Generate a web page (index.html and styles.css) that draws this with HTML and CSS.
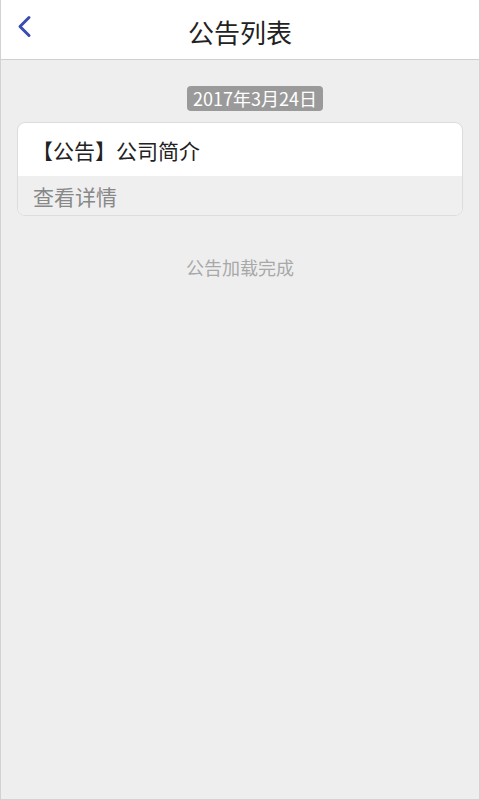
FILE: index.html
```html
<!DOCTYPE html>
<html lang="zh-CN">
<head>
<meta charset="utf-8">
<title>公告列表</title>
<link rel="stylesheet" href="styles.css">
</head>
<body>
<div class="app">
  <header class="topbar">
    <a class="back" href="#" aria-label="返回">
      <svg width="20" height="26" viewBox="0 0 20 26"><path d="M14 3.5 L5 12.5 L14 21.5" fill="none" stroke="#3b4cb0" stroke-width="3" stroke-linecap="round" stroke-linejoin="round"/></svg>
    </a>
    <h1 class="title">公告列表</h1>
    <span></span>
  </header>
  <main class="content">
    <div class="date-row"><span class="date">2017年3月24日</span></div>
    <div class="card">
      <div class="card-title">【公告】公司简介</div>
      <div class="card-foot">查看详情</div>
    </div>
    <p class="done">公告加载完成</p>
  </main>
</div>
</body>
</html>
```

FILE: styles.css
```css
html, body {
  margin: 0;
  padding: 0;
}
body {
  font-family: "Noto Sans CJK SC", "Noto Sans", sans-serif;
  background: #eeeeee;
}
.app {
  box-sizing: border-box;
  width: 480px;
  height: 800px;
  background: #eeeeee;
  border: 1px solid #d2d2d2;
  border-top: none;
  display: flex;
  flex-direction: column;
}
.topbar {
  height: 59px;
  background: #ffffff;
  border-bottom: 1px solid #cfcfcf;
  display: grid;
  grid-template-columns: 1fr auto 1fr;
  align-items: center;
}
.back {
  display: flex;
  align-items: center;
  padding-left: 14px;
  margin-top: -6px;
}
.title {
  margin: 0;
  font-size: 26px;
  font-weight: 400;
  color: #222222;
  margin-top: 4px;
}
.content {
  padding: 0 16px;
}
.date-row {
  display: flex;
  justify-content: center;
  margin-top: 26px;
}
.date {
  display: inline-block;
  height: 25px;
  line-height: 25px;
  padding: 0 6px;
  font-size: 18px;
  color: #ffffff;
  background: #9a9a9a;
  border-radius: 4px;
  margin-left: 30px;
}
.card {
  margin-top: 11px;
  border: 1px solid #dcdcdc;
  border-radius: 8px;
  overflow: hidden;
  background: #ffffff;
}
.card-title {
  height: 53px;
  line-height: 55px;
  padding-left: 14px;
  font-size: 21px;
  color: #222222;
}
.card-foot {
  height: 39px;
  line-height: 40px;
  padding-left: 15px;
  font-size: 21px;
  color: #888888;
  background: #efefef;
}
.done {
  margin: 38px 0 0;
  text-align: center;
  font-size: 18px;
  color: #a8a8a8;
}
```
